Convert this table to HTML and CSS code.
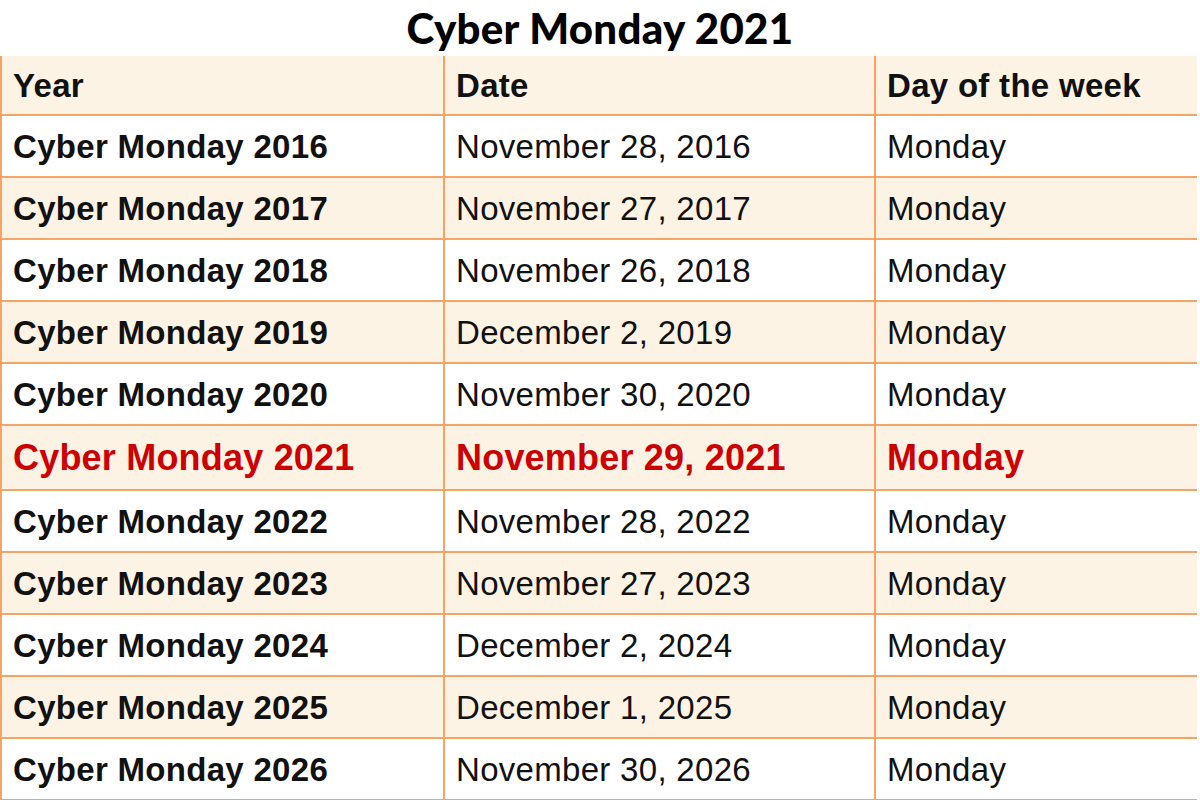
FILE: index.html
```html
<!DOCTYPE html>
<html>
<head>
<meta charset="utf-8">
<link rel="stylesheet" href="styles.css">
</head>
<body>
<h1 class="title">Cyber Monday 2021</h1>
<table class="dates">
  <colgroup><col class="c1"><col class="c2"><col class="c3"></colgroup>
  <thead>
    <tr class="head"><th>Year</th><th>Date</th><th>Day of the week</th></tr>
  </thead>
  <tbody>
    <tr><td class="yr">Cyber Monday 2016</td><td>November 28, 2016</td><td>Monday</td></tr>
    <tr class="alt"><td class="yr">Cyber Monday 2017</td><td>November 27, 2017</td><td>Monday</td></tr>
    <tr><td class="yr">Cyber Monday 2018</td><td>November 26, 2018</td><td>Monday</td></tr>
    <tr class="alt"><td class="yr">Cyber Monday 2019</td><td>December 2, 2019</td><td>Monday</td></tr>
    <tr><td class="yr">Cyber Monday 2020</td><td>November 30, 2020</td><td>Monday</td></tr>
    <tr class="alt hl"><td class="yr">Cyber Monday 2021</td><td>November 29, 2021</td><td>Monday</td></tr>
    <tr><td class="yr">Cyber Monday 2022</td><td>November 28, 2022</td><td>Monday</td></tr>
    <tr class="alt"><td class="yr">Cyber Monday 2023</td><td>November 27, 2023</td><td>Monday</td></tr>
    <tr><td class="yr">Cyber Monday 2024</td><td>December 2, 2024</td><td>Monday</td></tr>
    <tr class="alt"><td class="yr">Cyber Monday 2025</td><td>December 1, 2025</td><td>Monday</td></tr>
    <tr><td class="yr">Cyber Monday 2026</td><td>November 30, 2026</td><td>Monday</td></tr>
  </tbody>
</table>
</body>
</html>
```
FILE: styles.css
```css
html, body {
  margin: 0;
  padding: 0;
  background: #ffffff;
}
body {
  width: 1200px;
  height: 800px;
  overflow: hidden;
}
.title {
  margin: 0;
  height: 56px;
  display: flex;
  align-items: center;
  justify-content: center;
  font-family: "Lato", "DejaVu Sans", sans-serif;
  font-weight: 900;
  font-size: 42px;
  color: #000;
  letter-spacing: 0.3px;
}
.dates {
  border-collapse: collapse;
  table-layout: fixed;
  width: 1196px;
  margin-left: 0;
  font-family: "Liberation Sans", Arial, sans-serif;
  font-size: 33px;
  letter-spacing: 0.3px;
  color: #111;
}
.c1 { width: 443px; }
.c2 { width: 431px; }
.c3 { width: 322px; }
.dates th, .dates td {
  border: 2px solid #f4a465;
  padding: 0 0 0 11px;
  text-align: left;
  vertical-align: middle;
  height: 62px;
  line-height: 1;
  box-sizing: border-box;
  white-space: nowrap;
}
.dates thead th {
  border-top: none;
  height: 59px;
  font-weight: bold;
  background: #fdf3e4;
}
.dates th:last-child, .dates td:last-child {
  border-right: none;
}
.head th { background: #fdf3e4; }
.yr { font-weight: bold; }
.alt td { background: #fdf3e4; }
.hl td {
  color: #cc0000;
  font-weight: bold;
  font-size: 36px;
  letter-spacing: 0.2px;
  height: 65px;
}
```
